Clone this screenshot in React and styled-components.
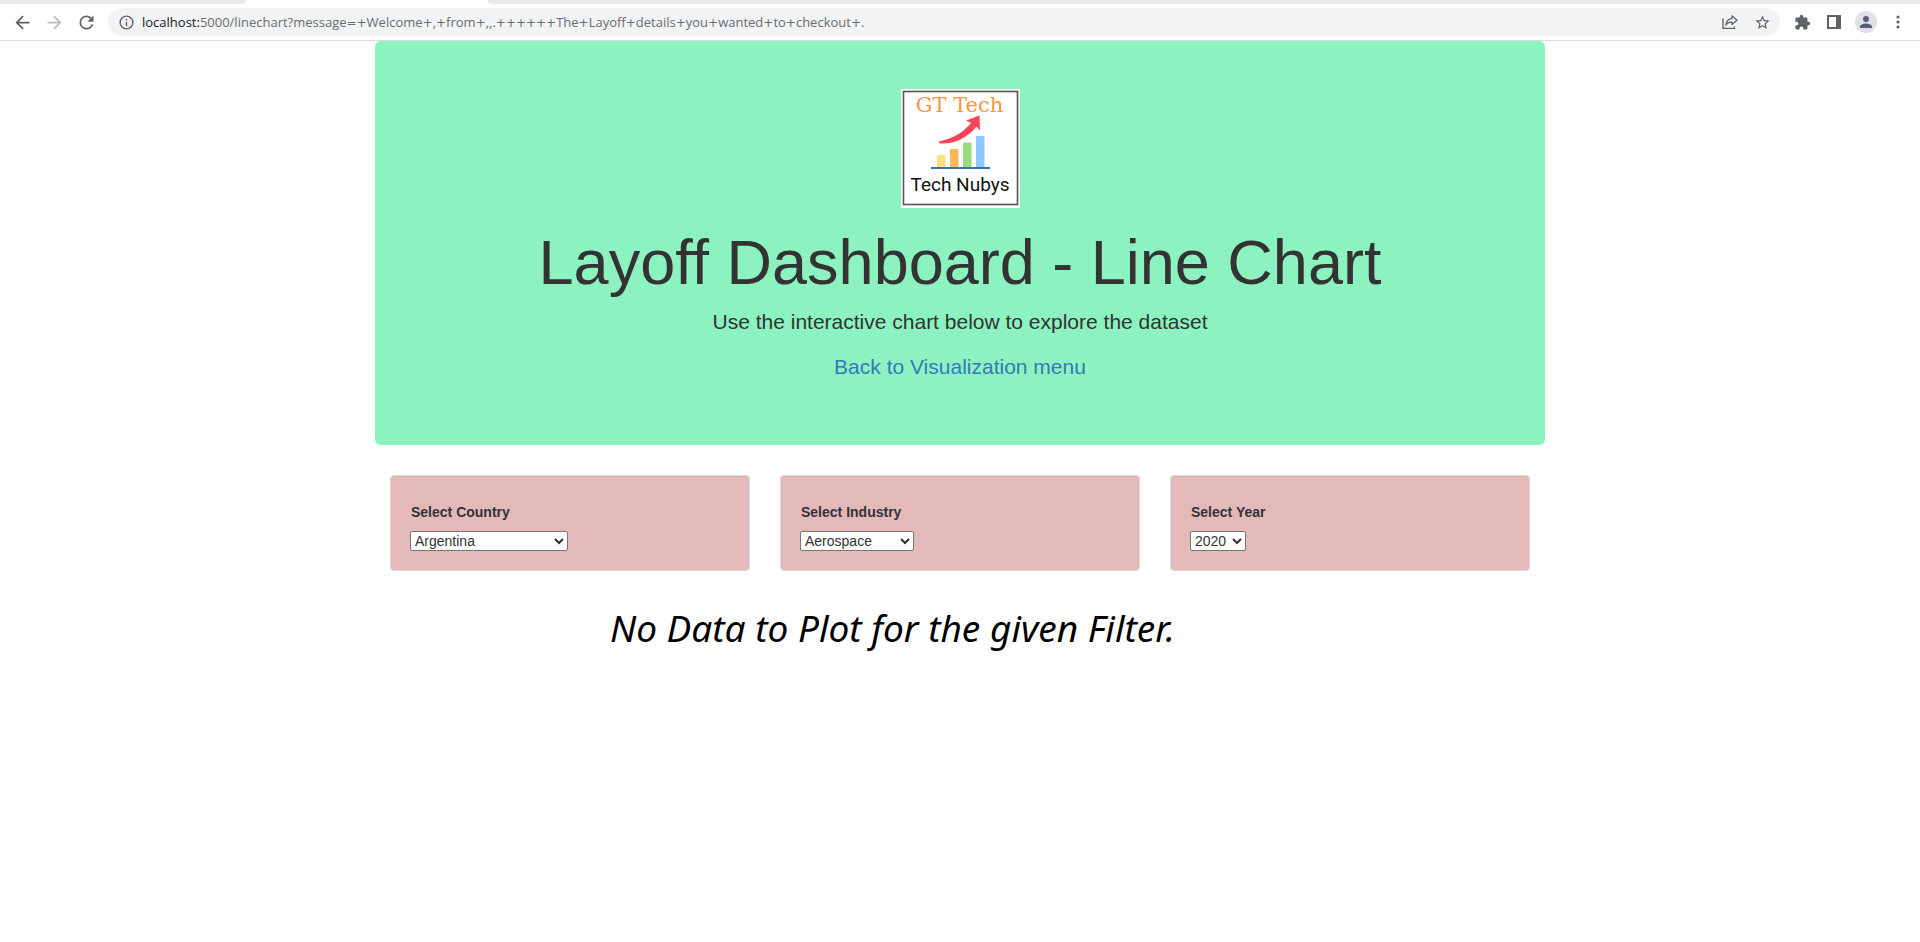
import React from "react";
import styled, { createGlobalStyle } from "styled-components";

const GlobalStyle = createGlobalStyle`
  *, *::before, *::after { box-sizing: border-box; }
  body {
    margin: 0;
    background: #fff;
    color: #333;
    font-family: "Liberation Sans", Arial, sans-serif;
    font-size: 14px;
    line-height: 20px;
  }
`;

const TabStrip = styled.div`
  display: flex;
  height: 4px;
  background: #fff;
`;

const TabGap = styled.div`
  width: ${(p) => p.$width || "auto"};
  flex: ${(p) => (p.$width ? "none" : 1)};
  background: #e8eaed;
  border-radius: ${(p) => (p.$width ? "0 0 8px 0" : "0 0 0 8px")};
`;

const ActiveTab = styled.div`
  width: 242px;
  background: #fff;
`;

const Toolbar = styled.header`
  display: flex;
  align-items: center;
  height: 37px;
  padding: 0 6px;
  border-bottom: 1px solid #dadce0;
`;

const IconButton = styled.button`
  display: flex;
  align-items: center;
  justify-content: center;
  flex: none;
  width: 32px;
  height: 28px;
  padding: 0;
  border: 0;
  background: none;
  color: ${(p) => (p.$muted ? "#bbbdbf" : "#5f6368")};
`;

const AddressBar = styled.div`
  display: flex;
  align-items: center;
  flex: 1;
  height: 28px;
  margin: 0 6px;
  padding: 0 2px;
  border-radius: 14px;
  background: #f1f3f4;
`;

const Url = styled.div`
  flex: 1;
  overflow: hidden;
  white-space: nowrap;
  font-family: "Open Sans", "Noto Sans", sans-serif;
  font-size: 13px;
  line-height: 20px;
  color: #6a6d71;
`;

const Host = styled.span`
  color: #202124;
`;

const Sign = styled.span`
  font-family: "DejaVu Sans", sans-serif;
  font-size: 12px;
`;

const Avatar = styled.span`
  display: flex;
  align-items: center;
  justify-content: center;
  width: 22px;
  height: 22px;
  border-radius: 50%;
  background: #dee1e6;
  color: #56607a;
`;

const Container = styled.main`
  width: 100%;
  max-width: 1170px;
  margin: 0 auto;
`;

const Jumbotron = styled.section`
  display: flex;
  flex-direction: column;
  align-items: center;
  padding: 48px 60px;
  margin-bottom: 30px;
  border-radius: 6px;
  background: #8cf2c0;
  text-align: center;
`;

const Title = styled.h1`
  margin: 20px 0 10px;
  font-size: 63px;
  font-weight: 500;
  line-height: 69px;
`;

const Lead = styled.p`
  margin: 0 0 15px;
  font-size: 21px;
  line-height: 30px;
`;

const BackLink = styled.a`
  color: #337ab7;
  text-decoration: none;
`;

const Filters = styled.div`
  display: grid;
  grid-template-columns: repeat(3, 1fr);
  gap: 30px;
  padding: 0 15px;
`;

const Well = styled.div`
  display: flex;
  flex-direction: column;
  align-items: flex-start;
  gap: 9px;
  padding: 26px 19px 19px;
  border: 1px solid #e0d8d8;
  border-radius: 4px;
  background: #e3b9b9;
  box-shadow: inset 0 1px 1px rgba(0, 0, 0, 0.05);
`;

const Label = styled.label`
  padding-left: 1px;
  font-weight: 700;
`;

const Select = styled.select`
  width: ${(p) => p.$width};
  height: 20px;
  padding: 0;
  border: 1px solid #767676;
  border-radius: 2px;
  background: #fff;
  color: #333;
  font-family: inherit;
  font-size: 14px;
  line-height: 18px;
`;

const EmptyMessage = styled.p`
  margin: 32px 0 0;
  padding-left: 235px;
  color: #000;
  font-family: "Noto Sans", "Open Sans", sans-serif;
  font-size: 37px;
  font-style: italic;
  line-height: 50px;
`;

const Icon = ({ size = 21, d }) => (
  <svg width={size} height={size} viewBox="0 0 24 24" fill="currentColor" aria-hidden="true">
    <path d={d} />
  </svg>
);

const paths = {
  back: "M20 11H7.83l5.59-5.59L12 4l-8 8 8 8 1.41-1.41L7.83 13H20v-2z",
  forward: "M12 4l-1.41 1.41L16.17 11H4v2h12.17l-5.58 5.59L12 20l8-8z",
  reload:
    "M17.65 6.35A7.96 7.96 0 0 0 12 4a8 8 0 1 0 7.73 10h-2.08A6 6 0 1 1 12 6c1.66 0 3.14.69 4.22 1.78L13 11h7V4l-2.35 2.35z",
  info: "M11 7h2v2h-2zm0 4h2v6h-2zm1-9a10 10 0 1 0 0 20 10 10 0 0 0 0-20zm0 18a8 8 0 1 1 0-16 8 8 0 0 1 0 16z",
  star:
    "M22 9.24l-7.19-.62L12 2 9.19 8.63 2 9.24l5.46 4.73L5.82 21 12 17.27 18.18 21l-1.63-7.03L22 9.24zM12 15.4l-3.76 2.27 1-4.28-3.32-2.88 4.38-.38L12 6.1l1.71 4.04 4.38.38-3.32 2.88 1 4.28L12 15.4z",
  extension:
    "M20.5 11H19V7a2 2 0 0 0-2-2h-4V3.5a2.5 2.5 0 0 0-5 0V5H4a2 2 0 0 0-1.99 2v3.8H3.5a2.7 2.7 0 0 1 0 5.4H2V20a2 2 0 0 0 2 2h3.8v-1.5a2.7 2.7 0 0 1 5.4 0V22H17a2 2 0 0 0 2-2v-4h1.5a2.5 2.5 0 0 0 0-5z",
  person:
    "M12 12a4 4 0 1 0 0-8 4 4 0 0 0 0 8zm0 2c-2.67 0-8 1.34-8 4v2h16v-2c0-2.66-5.33-4-8-4z",
};

const ShareIcon = () => (
  <svg width="16" height="16" viewBox="0 0 16 16" fill="none" stroke="currentColor" strokeWidth="1.3" aria-hidden="true">
    <path d="M1 4.5V14.4H12.5V12.5" />
    <path d="M10 1.8 15 6.2 10 10.6V8.1C7 8 5 9 3.8 11.2 4.2 7.5 6.4 4.8 10 4.3Z" strokeLinejoin="round" />
  </svg>
);

const PanelIcon = () => (
  <svg width="14" height="14" viewBox="0 0 14 14" aria-hidden="true">
    <path fill="currentColor" fillRule="evenodd" d="M0 0H14V14H0ZM2 2V12H9V2Z" />
  </svg>
);

const MenuIcon = () => (
  <svg width="4" height="14" viewBox="0 0 4 14" fill="currentColor" aria-hidden="true">
    <circle cx="2" cy="2" r="1.6" />
    <circle cx="2" cy="7" r="1.6" />
    <circle cx="2" cy="12" r="1.6" />
  </svg>
);

const Logo = () => (
  <svg width="119" height="119" viewBox="0 0 119 119" role="img" aria-label="GT Tech, Tech Nubys">
    <rect width="119" height="119" fill="#fff" />
    <rect x="2.5" y="2.5" width="114" height="113" fill="none" stroke="#555" strokeWidth="1.6" />
    <text x="58.5" y="23" textAnchor="middle" fontFamily="DejaVu Serif, serif" fontSize="21" fill="#f59642">
      GT Tech
    </text>
    <rect x="36" y="66" width="8.5" height="13" rx="1" fill="#ffdf80" />
    <rect x="49" y="60" width="8.5" height="19" rx="1" fill="#ffb657" />
    <rect x="62" y="53.5" width="8.5" height="25.5" rx="1" fill="#98dc7c" />
    <rect x="75" y="47" width="8.5" height="32" rx="1" fill="#8cc8ff" />
    <path d="M30 79H89" stroke="#3c6fa0" strokeWidth="1.8" />
    <path d="M38 52.5C51 50 63 43 70 34L65 31.5 78.5 26.5 79 41.5 75.5 37.500C66 49.5 52 55.5 38.5 54.5Z" fill="#fb4357" />
    <text x="59" y="102" textAnchor="middle" fontFamily="Roboto, sans-serif" fontSize="19" fill="#111">
      Tech Nubys
    </text>
  </svg>
);

const query =
  "5000/linechart?message=+Welcome+,+from+,,.++++++The+Layoff+details+you+wanted+to+checkout+.";

const filters = [
  { id: "country", label: "Select Country", value: "Argentina", width: "158px" },
  { id: "industry", label: "Select Industry", value: "Aerospace", width: "114px" },
  { id: "year", label: "Select Year", value: "2020", width: "56px" },
];

export default function App() {
  return (
    <>
      <GlobalStyle />
      <TabStrip>
        <TabGap $width="246px" />
        <ActiveTab />
        <TabGap />
      </TabStrip>
      <Toolbar>
        <IconButton aria-label="Back"><Icon d={paths.back} /></IconButton>
        <IconButton aria-label="Forward" $muted><Icon d={paths.forward} /></IconButton>
        <IconButton aria-label="Reload"><Icon d={paths.reload} /></IconButton>
        <AddressBar>
          <IconButton aria-label="Site information"><Icon size={17} d={paths.info} /></IconButton>
          <Url>
            <Host>localhost:</Host>
            {query.split(/([+=]+)/).map((part, i) => (i % 2 ? <Sign key={i}>{part}</Sign> : part))}
          </Url>
          <IconButton aria-label="Share"><ShareIcon /></IconButton>
          <IconButton aria-label="Bookmark"><Icon size={17} d={paths.star} /></IconButton>
        </AddressBar>
        <IconButton aria-label="Extensions"><Icon size={17} d={paths.extension} /></IconButton>
        <IconButton aria-label="Side panel"><PanelIcon /></IconButton>
        <IconButton aria-label="Profile">
          <Avatar><Icon size={18} d={paths.person} /></Avatar>
        </IconButton>
        <IconButton aria-label="Menu"><MenuIcon /></IconButton>
      </Toolbar>
      <Container>
        <Jumbotron>
          <Logo />
          <Title>Layoff Dashboard - Line Chart</Title>
          <Lead>Use the interactive chart below to explore the dataset</Lead>
          <Lead><BackLink href="#menu">Back to Visualization menu</BackLink></Lead>
        </Jumbotron>
        <Filters>
          {filters.map((f) => (
            <Well key={f.id}>
              <Label htmlFor={f.id}>{f.label}</Label>
              <Select id={f.id} $width={f.width} defaultValue={f.value}>
                <option>{f.value}</option>
              </Select>
            </Well>
          ))}
        </Filters>
        <EmptyMessage>No Data to Plot for the given Filter.</EmptyMessage>
      </Container>
    </>
  );
}
